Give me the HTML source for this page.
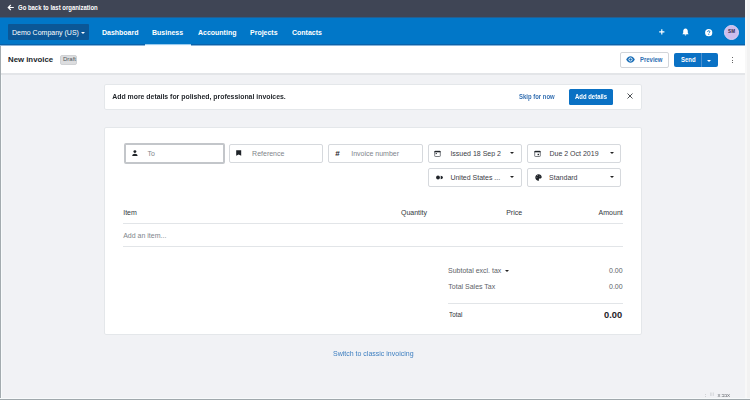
<!DOCTYPE html>
<html><head><meta charset="utf-8">
<style>
*{box-sizing:border-box;margin:0;padding:0}
html,body{width:750px;height:400px;overflow:hidden}
body{position:relative;background:#f1f2f5;font-family:"Liberation Sans",sans-serif;color:#2a2e33}
.a{position:absolute}
.t{position:absolute;white-space:pre;line-height:7px;font-size:7px}
.b{font-weight:bold}
.sx{transform:scaleX(.85);transform-origin:0 0}
.nv{font-size:7.6px;line-height:7.6px;transform:scaleX(.92);transform-origin:0 0}
#top{left:0;top:0;width:750px;height:17px;background:#3f4555}
#nav{left:0;top:17px;width:750px;height:28px;background:#0177c8;border-bottom:1px solid #0a62aa}
#navb{left:0;top:45px;width:750px;height:1px;background:#88b3d8}
#hdr{left:0;top:46px;width:750px;height:29px;background:#fff;border-bottom:2px solid #e3e5e8}
#sb{left:745px;top:0;width:5px;height:400px;background:#f2f2f2;border-left:2px solid #f8f8f8}
#bot{left:0;top:398px;width:750px;height:2px;background:#a0a8ac;border-top:1px solid #f8fbfc}
.field{position:absolute;background:#fff;border:1px solid #d6d9dd;border-radius:2px}
.ph{color:#80858b}
.val{color:#3c4047}
.caret{position:absolute;width:0;height:0;border-left:2px solid transparent;border-right:2px solid transparent;border-top:2.5px solid #222}
.line{position:absolute;height:1px;background:#e2e5e8}
</style></head><body><div id="wrap" style="position:absolute;left:0;top:0;width:750px;height:400px;filter:blur(0.3px)">
<div id="top" class="a"></div>
<svg class="a" style="left:7px;top:3.5px" width="8" height="7" viewBox="0 0 8 7"><path d="M6.8 3.5H1.3M3.8 1L1.3 3.5L3.8 6" stroke="#fff" stroke-width="1.2" fill="none"/></svg>
<div class="t b sx" style="left:18px;top:3.7px;color:#fff">Go back to last organization</div>

<div id="nav" class="a"></div><div class="a" style="left:0;top:17px;width:750px;height:1px;background:#235f92"></div><div id="navb" class="a"></div>
<div class="a" style="left:7.5px;top:24.3px;width:81.5px;height:15.7px;background:#0b5797;border-radius:1px"></div>
<div class="t" style="left:12px;top:29.4px;color:#fff">Demo Company (US)</div>
<div class="caret" style="left:80.7px;top:31.5px;border-top-color:#fff;border-left-width:2px;border-right-width:2px;border-top-width:2px"></div>
<div class="t b nv" style="left:101.6px;top:28.8px;color:#fff">Dashboard</div>
<div class="t b nv" style="left:152px;top:28.8px;color:#fff">Business</div>
<div class="a" style="left:145px;top:44px;width:46px;height:1px;background:#9acbee"></div><div class="a" style="left:145px;top:45px;width:46px;height:1px;background:#f4faff"></div>
<div class="t b nv" style="left:197.6px;top:28.8px;color:#fff">Accounting</div>
<div class="t b nv" style="left:250px;top:28.8px;color:#fff">Projects</div>
<div class="t b nv" style="left:292px;top:28.8px;color:#fff">Contacts</div>

<svg class="a" style="left:659.3px;top:29.4px" width="6" height="6" viewBox="0 0 6 6"><path d="M2.8 0.2V5.4M0.2 2.8H5.4" stroke="#fff" stroke-width="1.15"/></svg>
<svg class="a" style="left:682px;top:28.4px" width="7" height="8" viewBox="0 0 7 8"><path d="M3.5 0.5C1.8 0.5 1.2 2 1.2 3.3V5L0.3 6.2H6.7L5.8 5V3.3C5.8 2 5.2 0.5 3.5 0.5Z M2.6 6.6A0.9 0.9 0 0 0 4.4 6.6Z" fill="#fff"/></svg>
<svg class="a" style="left:704.8px;top:28.8px" width="8" height="8" viewBox="0 0 8 8"><circle cx="3.7" cy="3.7" r="3.6" fill="#fff"/><path d="M2.6 2.9C2.6 2.1 3.1 1.7 3.75 1.7C4.4 1.7 4.9 2.1 4.9 2.8C4.9 3.5 4 3.6 3.8 4.4" stroke="#0177c8" stroke-width="0.9" fill="none"/><circle cx="3.8" cy="5.6" r="0.5" fill="#0177c8"/></svg>
<div class="a" style="left:724px;top:25px;width:15px;height:15px;border-radius:50%;background:#cdbcec;border:1px solid #ddd2f4"></div>
<div class="t b" style="left:728.1px;top:30.1px;color:#2c2a4c;font-size:4.6px;line-height:4.6px">SM</div>

<div id="hdr" class="a"></div>
<div class="a" style="left:0;top:46px;width:1px;height:354px;background:#a3abaf"></div><div class="a" style="left:1px;top:75px;width:1px;height:324px;background:#f8fbfc"></div>
<div class="t b" style="left:8px;top:56.1px;font-size:7.8px;line-height:7.8px;color:#22262b">New invoice</div>
<div class="a" style="left:60px;top:55px;width:17px;height:10px;background:#dcdddf;border:1px solid #d0d2d5;border-radius:2px"></div>
<div class="t" style="left:63px;top:56.3px;font-size:6px;line-height:6px;color:#50555b">Draft</div>

<div class="a" style="left:620px;top:52px;width:49px;height:16px;background:#fff;border:1px solid #d2d5d9;border-radius:2px"></div>
<svg class="a" style="left:626px;top:55.8px" width="9" height="7" viewBox="0 0 9 7"><path d="M0.2 3.5C1.4 1.2 2.9 0.2 4.5 0.2S7.6 1.2 8.8 3.5C7.6 5.8 6.1 6.8 4.5 6.8S1.4 5.8 0.2 3.5Z" fill="#1a6fb8"/><circle cx="4.5" cy="3.5" r="2" fill="#fff"/><circle cx="4.5" cy="3.5" r="1.2" fill="#1a6fb8"/></svg>
<div class="t b sx" style="left:639.9px;top:56.3px;color:#2d6fb3">Preview</div>
<div class="a" style="left:674px;top:53px;width:44px;height:14px;background:#0a71c4;border-radius:2px"></div>
<div class="a" style="left:701px;top:53px;width:1px;height:14px;background:#4a8fd0"></div>
<div class="t b sx" style="left:680.8px;top:56.3px;color:#fff">Send</div>
<div class="caret" style="left:707px;top:59.6px;border-top-color:#fff"></div>
<div class="a" style="left:732px;top:56.8px;width:1.3px;height:1.3px;background:#333;border-radius:50%"></div>
<div class="a" style="left:732px;top:59.5px;width:1.3px;height:1.3px;background:#333;border-radius:50%"></div>
<div class="a" style="left:732px;top:62.2px;width:1.3px;height:1.3px;background:#333;border-radius:50%"></div>

<!-- banner -->
<div class="a" style="left:104px;top:84px;width:538px;height:26px;background:#fff;border:1px solid #e4e7ea;border-radius:2px"></div>
<div class="t b" style="left:112.3px;top:92.5px;color:#1f2328;font-size:6.9px;line-height:7px">Add more details for polished, professional invoices.</div>
<div class="t b sx" style="left:518.7px;top:93px;color:#3570b2">Skip for now</div>
<div class="a" style="left:569px;top:89px;width:44.3px;height:16px;background:#0a71c4;border-radius:1.5px"></div>
<div class="t b sx" style="left:575px;top:93px;color:#fff">Add details</div>
<svg class="a" style="left:627.2px;top:93.2px" width="6" height="6" viewBox="0 0 6 6"><path d="M0.5 0.5L5.5 5.5M5.5 0.5L0.5 5.5" stroke="#3a3e44" stroke-width="0.9"/></svg>

<!-- card -->
<div class="a" style="left:104px;top:127px;width:538px;height:208px;background:#fff;border:1px solid #e4e7ea;border-radius:2px"></div>

<div class="field" style="left:124px;top:143px;width:101px;height:21px;border:2px solid #c3c6ca"></div>
<svg class="a" style="left:131.6px;top:150.2px" width="6" height="6" viewBox="0 0 6 6"><circle cx="2.9" cy="1.6" r="1.45" fill="#1f2328"/><path d="M0.2 5.9C0.2 4.5 1.4 3.75 2.9 3.75S5.6 4.5 5.6 5.9Z" fill="#1f2328"/></svg>
<div class="t ph" style="left:147.5px;top:149.9px">To</div>

<div class="field" style="left:229px;top:144px;width:94px;height:19px"></div>
<svg class="a" style="left:236.3px;top:150px" width="6" height="6" viewBox="0 0 6 6"><path d="M0.2 0.2H5.2V5.8L2.7 4.6L0.2 5.8Z" fill="#1f2328"/></svg>
<div class="t ph" style="left:252.1px;top:150.2px">Reference</div>

<div class="field" style="left:328px;top:144px;width:95px;height:19px"></div>
<div class="t b" style="left:335.2px;top:149.5px;color:#1f2328;font-size:8px;line-height:8px">#</div>
<div class="t ph" style="left:351.2px;top:150.2px">Invoice number</div>

<div class="field" style="left:428px;top:144px;width:94px;height:19px"></div>
<svg class="a" style="left:434px;top:150px" width="7" height="7" viewBox="0 0 7 7"><rect x="0.7" y="1.2" width="5.6" height="5.3" rx="0.6" fill="none" stroke="#5a5e64" stroke-width="0.8"/><rect x="0.5" y="1" width="6" height="1.3" fill="#1f2328"/><rect x="1.7" y="3" width="1.1" height="1.1" fill="#1f2328"/></svg>
<div class="t val" style="left:450.4px;top:150.2px;width:50.2px;overflow:hidden">Issued 18 Sep 2019</div>
<div class="caret" style="left:510.4px;top:152.4px"></div>

<div class="field" style="left:527px;top:144px;width:94px;height:19px"></div>
<svg class="a" style="left:533.5px;top:150px" width="7" height="7" viewBox="0 0 7 7"><rect x="0.7" y="1.2" width="5.6" height="5.3" rx="0.6" fill="none" stroke="#5a5e64" stroke-width="0.8"/><rect x="0.5" y="1" width="6" height="1.3" fill="#1f2328"/><rect x="3.6" y="3.8" width="1.4" height="1.4" fill="#1f2328"/></svg>
<div class="t val" style="left:549.5px;top:150.2px">Due 2 Oct 2019</div>
<div class="caret" style="left:609.8px;top:152.4px"></div>

<div class="field" style="left:428px;top:168px;width:94px;height:19px"></div>
<svg class="a" style="left:436px;top:175px" width="7" height="5" viewBox="0 0 7 5"><circle cx="2" cy="2.5" r="1.9" fill="#1f2328"/><path d="M4.7 0.7A2.2 1.8 0 0 1 4.7 4.3Z" fill="#1f2328"/></svg>
<div class="t val" style="left:450.4px;top:174.2px">United States ...</div>
<div class="caret" style="left:510.4px;top:176.4px"></div>

<div class="field" style="left:527px;top:168px;width:94px;height:19px"></div>
<svg class="a" style="left:534.6px;top:174px" width="7" height="7" viewBox="0 0 7 7"><path d="M3.5 0.3C1.7 0.3 0.3 1.7 0.3 3.5S1.7 6.7 3.5 6.7C3.9 6.7 4.1 6.4 4.1 6.1C4.1 5.7 3.8 5.6 3.8 5.2C3.8 4.8 4.1 4.6 4.5 4.6H5.2C6.1 4.6 6.7 4 6.7 3.1C6.7 1.5 5.3 0.3 3.5 0.3Z" fill="#1f2328"/><circle cx="1.9" cy="3.2" r="0.4" fill="#fff"/><circle cx="2.6" cy="1.7" r="0.4" fill="#fff"/><circle cx="4.9" cy="2.1" r="0.4" fill="#fff"/></svg>
<div class="t val" style="left:549.1px;top:174.2px">Standard</div>
<div class="caret" style="left:609.8px;top:176.4px"></div>

<!-- table -->
<div class="t" style="left:123.2px;top:209px;color:#33373d">Item</div>
<div class="t" style="left:401px;top:209px;color:#33373d">Quantity</div>
<div class="t" style="left:506.2px;top:209px;color:#33373d">Price</div>
<div class="t" style="left:598.6px;top:209px;color:#33373d">Amount</div>
<div class="line" style="left:123px;top:222.8px;width:500px"></div>
<div class="t ph" style="left:123.2px;top:231.7px">Add an item...</div>
<div class="line" style="left:123px;top:246px;width:500px"></div>

<div class="t" style="left:448px;top:266.6px;color:#5d6268">Subtotal excl. tax</div>
<div class="caret" style="left:505px;top:269.6px"></div>
<div class="t" style="left:609px;top:266.6px;color:#5d6268">0.00</div>
<div class="t" style="left:448.3px;top:283px;color:#5d6268">Total Sales Tax</div>
<div class="t" style="left:609px;top:283px;color:#5d6268">0.00</div>
<div class="line" style="left:448px;top:302.6px;width:175px"></div>
<div class="t" style="left:448.5px;top:311px;color:#2e3238;transform:scaleX(.9);transform-origin:0 0">Total</div>
<div class="t b" style="left:604px;top:310.2px;font-size:9.6px;line-height:9.6px;color:#1f2328;transform:scaleX(.97);transform-origin:0 0">0.00</div>

<div class="t" style="left:333px;top:350px;color:#3d7fc0">Switch to classic invoicing</div>

<div class="t" style="left:704.5px;top:391.5px;font-size:6px;line-height:6px;color:#8d9196;letter-spacing:0.3px">:</div><div class="t" style="left:710px;top:391px;font-size:6px;line-height:6px;color:#c8cbce">iii</div><div class="t" style="left:717.5px;top:391.5px;font-size:6px;line-height:6px;color:#6d7176;letter-spacing:-0.3px">x ɔɔx</div><div id="sb" class="a"></div>
<div id="bot" class="a"></div>
</div></body></html>
